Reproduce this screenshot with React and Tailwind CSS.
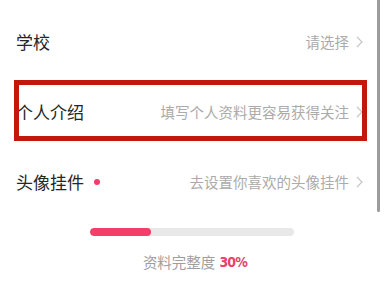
import React from "react";

function Chevron() {
  return (
    <svg width="7" height="12" viewBox="0 0 7 12" className="shrink-0">
      <polyline points="1,1 6,6 1,11" fill="none" stroke="#c4c4c4" strokeWidth="1.1" />
    </svg>
  );
}

function Row({ label, value, dot }) {
  return (
    <div className="flex h-[70px] items-center justify-between pl-4 pr-[21px]">
      <div className="flex items-center">
        <span className="text-[17px] text-[#262626]">{label}</span>
        {dot && <span className="ml-[10px] h-[6px] w-[6px] rounded-full bg-[#f03d6b]" />}
      </div>
      <div className="flex items-center gap-[7px]">
        <span className="text-[14.5px] text-[#ababab]">{value}</span>
        <Chevron />
      </div>
    </div>
  );
}

export default function App() {
  return (
    <div
      className="relative h-[288px] w-[384px] overflow-hidden bg-white"
      style={{ fontFamily: '"Noto Sans CJK SC", "Noto Sans", sans-serif' }}
    >
      <div className="pt-[7px]">
        <Row label="学校" value="请选择" />
        <Row label="个人介绍" value="填写个人资料更容易获得关注" />
        <Row label="头像挂件" value="去设置你喜欢的头像挂件" dot />
        <div className="mt-[11px] flex justify-center">
          <div className="h-[8px] w-[204px] overflow-hidden rounded-full bg-[#e8e8e8]">
            <div className="h-full w-[30%] rounded-full bg-[#f43e69]" />
          </div>
        </div>
        <div className="mt-[16px] flex items-center justify-center gap-[4px] pl-[6px] leading-5">
          <span className="text-[14.5px] text-[#9e9e9e]">资料完整度</span>
          <span
            className="text-[14px] font-bold tracking-[-0.8px] text-[#e8406a]"
            style={{ fontFamily: '"Liberation Sans Narrow", "DejaVu Sans Condensed", "Liberation Sans", sans-serif' }}
          >
            30%
          </span>
        </div>
      </div>
      <div className="absolute left-[14px] top-[80px] h-[61px] w-[353px] border-[5px] border-[#c3160c]" />
      <div className="absolute right-[4px] top-0 h-[212px] w-[3px] rounded-b-full bg-[#9c9c9c]" />
    </div>
  );
}
